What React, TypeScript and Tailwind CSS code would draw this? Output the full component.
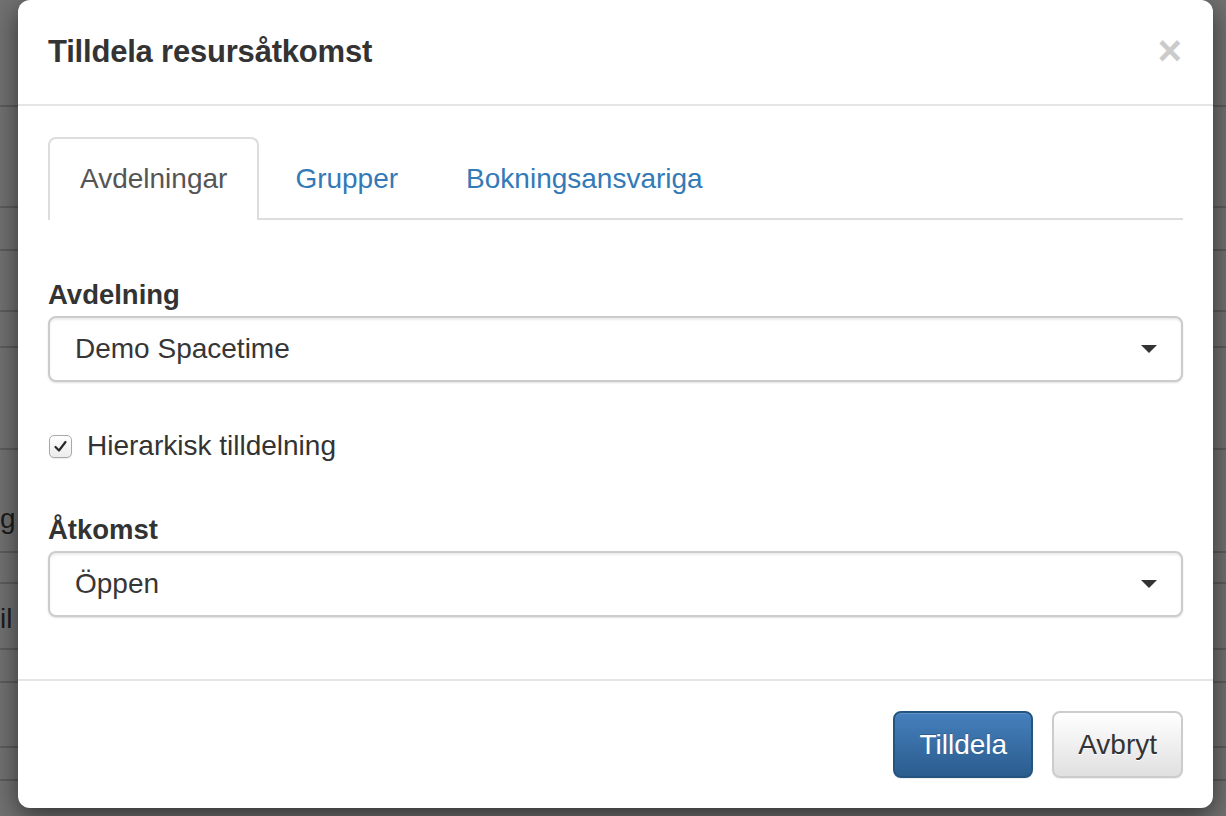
import React from "react";

const font = { fontFamily: '"Liberation Sans", Arial, Helvetica, sans-serif' };

function BgRow({ h, children, last }: { h: string; children?: React.ReactNode; last?: boolean }) {
  return (
    <div className={`${h} ${last ? "" : "border-b-2 border-[#5c5c5c]"} flex items-center text-[28px] text-[#1c1c1c] shrink-0`}>
      {children}
    </div>
  );
}

function Caret() {
  return (
    <svg width="16" height="8" viewBox="0 0 16 8" className="shrink-0">
      <path d="M0 0 H16 L8 8 Z" fill="#333" />
    </svg>
  );
}

function Select({ value }: { value: string }) {
  return (
    <div className="h-[66px] w-full border-2 border-[#cccccc] rounded-[8px] bg-white flex items-center justify-between pl-[25px] pr-[24px] shadow-[inset_0_2px_2px_rgba(0,0,0,0.075),0_1px_2px_rgba(0,0,0,0.12)]">
      <span className="text-[28px] text-[#363636] leading-[40px]">{value}</span>
      <Caret />
    </div>
  );
}

export default function App() {
  return (
    <div className="relative w-[1226px] h-[816px] overflow-hidden bg-[#717171]" style={font}>
      {/* background page behind overlay */}
      <div className="flex flex-col w-full">
        <BgRow h="h-[107px]" />
        <BgRow h="h-[101px]" />
        <BgRow h="h-[43px]" />
        <BgRow h="h-[61px]" />
        <BgRow h="h-[36px]" />
        <BgRow h="h-[102px]" />
        <BgRow h="h-[103px]">
          <span className="mt-[36px]">g</span>
        </BgRow>
        <BgRow h="h-[31px]" />
        <BgRow h="h-[66px]">
          <span className="mt-[6px]">il</span>
        </BgRow>
        <BgRow h="h-[33px]" />
        <BgRow h="h-[65px]" />
        <BgRow h="h-[33px]" />
        <BgRow h="h-[40px]" last />
      </div>

      {/* modal */}
      <div className="absolute left-[18px] top-0 w-[1195px] h-[808px] bg-white rounded-[12px] shadow-[0_8px_26px_rgba(0,0,0,0.55)] flex flex-col text-[#333]">
        {/* header */}
        <div className="h-[106px] border-b-2 border-[#e5e5e5] px-[30px] flex items-center justify-between shrink-0">
          <h4 className="text-[31px] font-bold tracking-[-0.2px] text-[#333] leading-[40px] mt-[-1px]">
            Tilldela resursåtkomst
          </h4>
          <span className="text-[42px] font-bold text-black opacity-20 leading-none mr-[1px] mt-[-3px]">×</span>
        </div>

        {/* body */}
        <div className="flex-1 px-[30px] pt-[31px]">
          <div className="flex border-b-2 border-[#dddddd] text-[28px] leading-[40px]">
            <div className="border-2 border-b-0 border-[#dddddd] rounded-t-[8px] bg-white px-[30px] pt-[20px] pb-[21px] mb-[-2px] text-[#555]">
              Avdelningar
            </div>
            <div className="border-x-2 border-transparent px-[30px] pt-[22px] ml-[4px] text-[#337ab7]">Grupper</div>
            <div className="border-x-2 border-transparent px-[30px] pt-[22px] ml-[4px] text-[#337ab7]">Bokningsansvariga</div>
          </div>

          <div className="mt-[55px]">
            <div className="text-[27.5px] font-bold leading-[40px] mb-[1px]">Avdelning</div>
            <Select value="Demo Spacetime" />
          </div>

          <div className="mt-[44px] h-[40px] flex items-center">
            <div className="w-[23px] h-[23px] ml-[1px] rounded-[5px] border border-[#a9a9a9] bg-gradient-to-b from-white to-[#ececec] flex items-center justify-center shadow-[0_1px_1px_rgba(0,0,0,0.08)]">
              <svg width="15" height="13" viewBox="0 0 15 13">
                <path d="M2.5 7 L6 10.5 L12.5 2" fill="none" stroke="#2a2a2a" strokeWidth="2.2" strokeLinecap="round" strokeLinejoin="round" />
              </svg>
            </div>
            <span className="ml-[15px] text-[28px] leading-[40px]">Hierarkisk tilldelning</span>
          </div>

          <div className="mt-[44px]">
            <div className="text-[27.5px] font-bold leading-[40px] mb-[1px]">Åtkomst</div>
            <Select value="Öppen" />
          </div>
        </div>

        {/* footer */}
        <div className="h-[129px] border-t-2 border-[#e5e5e5] px-[30px] pt-[30px] flex justify-end items-start gap-[19px] shrink-0">
          <button className="h-[67px] px-[24px] rounded-[8px] border-2 border-[#245580] bg-gradient-to-b from-[#4580bd] to-[#2b5d8e] text-white text-[28px] leading-[40px] [text-shadow:0_-1px_0_rgba(0,0,0,0.2)] shadow-[inset_0_1px_0_rgba(255,255,255,0.15),0_1px_1px_rgba(0,0,0,0.075)]">
            Tilldela
          </button>
          <button className="h-[67px] px-[24px] rounded-[8px] border-2 border-[#cccccc] bg-gradient-to-b from-white to-[#e0e0e0] text-[#333] text-[28px] leading-[40px] [text-shadow:0_1px_0_#fff] shadow-[inset_0_1px_0_rgba(255,255,255,0.15),0_1px_1px_rgba(0,0,0,0.075)]">
            Avbryt
          </button>
        </div>
      </div>
    </div>
  );
}
